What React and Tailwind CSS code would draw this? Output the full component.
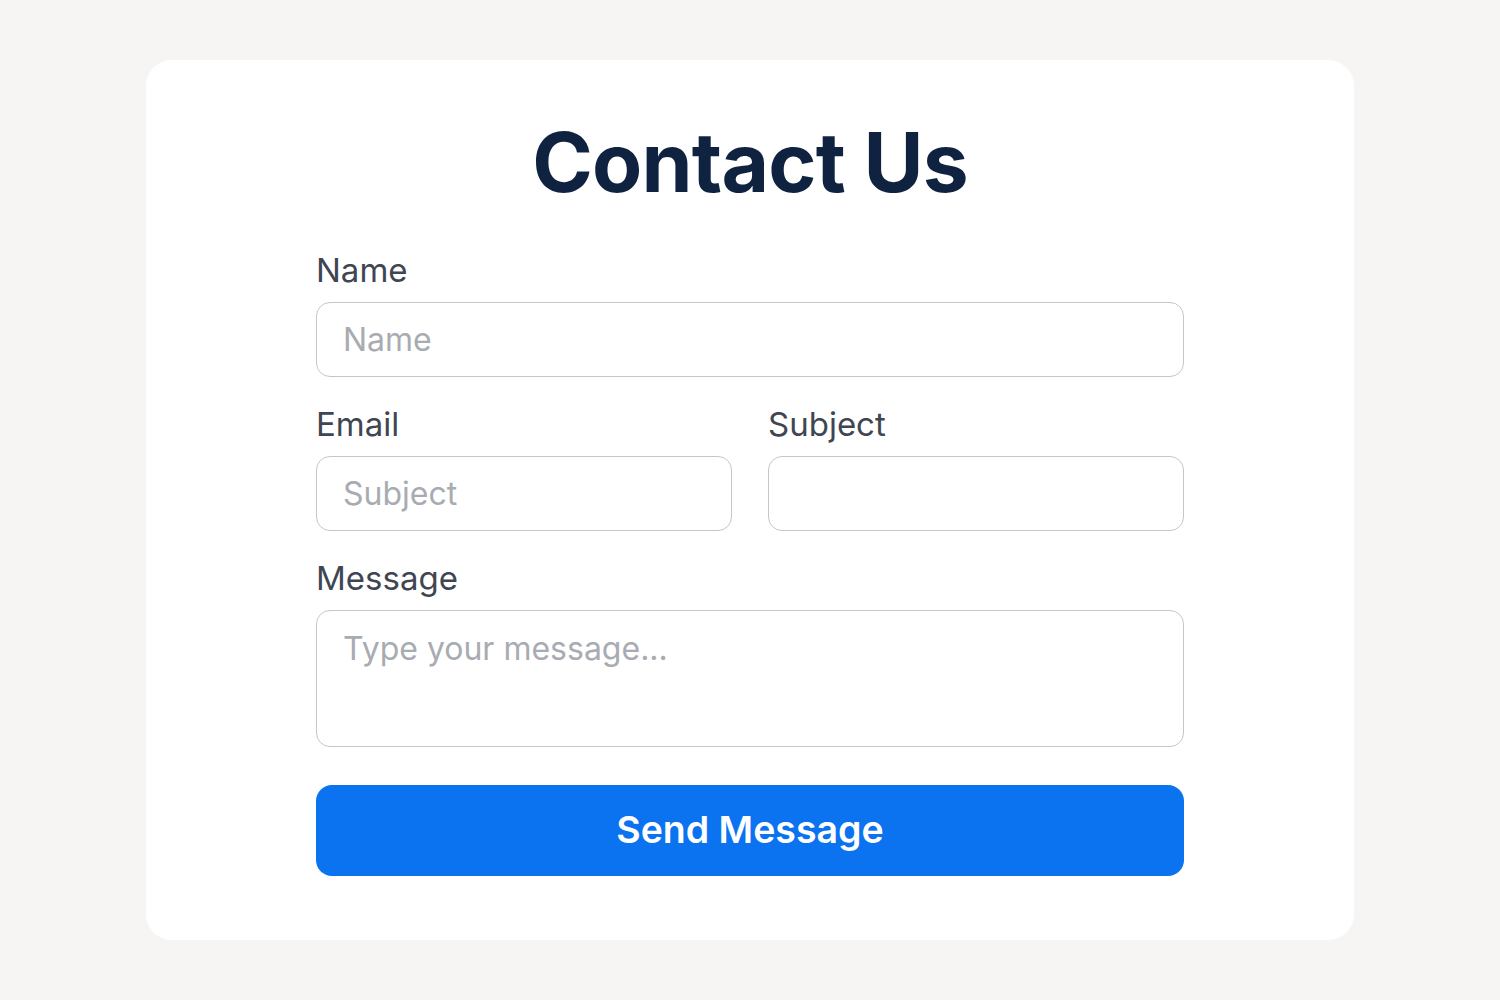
import React from 'react';

const inter = { fontFamily: 'Inter, "Noto Sans", sans-serif' };

const Field = ({ label, children }) => (
  <div className="flex flex-col">
    <label className="text-[33px] leading-[40px] text-[#3f4652] mb-3">{label}</label>
    {children}
  </div>
);

const inputClass =
  'w-full h-[75px] px-[26px] rounded-[14px] border-[1.5px] border-[#c4c6c9] bg-white text-[32px] text-[#1f2937] placeholder:text-[#a8acb2] outline-none';

const App = () => {
  return (
    <div className="min-h-screen w-full bg-[#f6f5f3] pt-[60px]" style={inter}>
      <div className="mx-auto w-[1208px] h-[880px] bg-white rounded-[26px] px-[170px] pt-[62px]">
        <h1 className="text-center text-[82px] leading-none font-bold tracking-[-0.8px] text-[#0f2340]">
          Contact Us
        </h1>

        <form className="mt-[46px] flex flex-col gap-[27px]" onSubmit={(e) => e.preventDefault()}>
          <Field label="Name">
            <input className={inputClass} placeholder="Name" />
          </Field>

          <div className="grid grid-cols-2 gap-[36px]">
            <Field label="Email">
              <input className={inputClass} placeholder="Subject" />
            </Field>
            <Field label="Subject">
              <input className={inputClass} />
            </Field>
          </div>

          <Field label="Message">
            <textarea
              className="w-full h-[137px] px-[26px] pt-[18px] rounded-[14px] border-[1.5px] border-[#c4c6c9] bg-white text-[32px] leading-[40px] text-[#1f2937] placeholder:text-[#a8acb2] outline-none resize-none"
              placeholder="Type your message..."
            />
          </Field>

          <button
            type="submit"
            className="mt-[11px] w-full h-[91px] rounded-[16px] bg-[#0b72f0] text-white text-[37.5px] font-semibold"
          >
            Send Message
          </button>
        </form>
      </div>
    </div>
  );
};

export default App;
